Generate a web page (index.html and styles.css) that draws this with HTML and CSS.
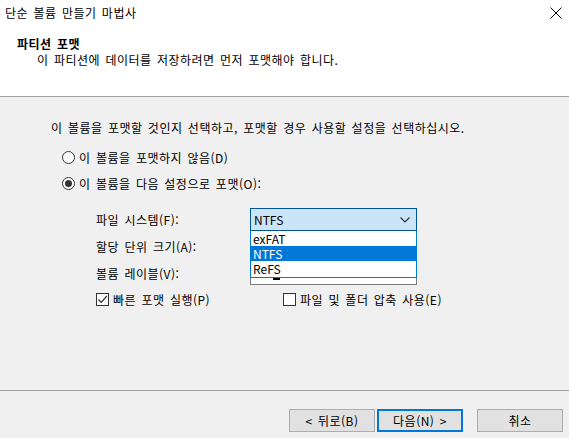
FILE: index.html
```html
<!DOCTYPE html>
<html lang="ko">
<head>
<meta charset="utf-8">
<link rel="stylesheet" href="styles.css">
</head>
<body>
<div class="window">
  <div class="header">
    <div class="titlebar">
      <span class="title">단순 볼륨 만들기 마법사</span>
      <svg class="close" width="12" height="12" viewBox="0 0 12 12"><path d="M0.5 0.5 L11.5 11.5 M11.5 0.5 L0.5 11.5" stroke="#000" stroke-width="1" fill="none"/></svg>
    </div>
    <div class="heading">파티션 포맷</div>
    <div class="subheading">이 파티션에 데이터를 저장하려면 먼저 포맷해야 합니다.</div>
  </div>
  <div class="content">
    <div class="prompt">이 볼륨을 포맷할 것인지 선택하고, 포맷할 경우 사용할 설정을 선택하십시오.</div>
    <div class="radio-row first"><span class="radio"></span><span>이 볼륨을 포맷하지 않음(D)</span></div>
    <div class="radio-row"><span class="radio checked"><span class="dot"></span></span><span>이 볼륨을 다음 설정으로 포맷(O):</span></div>
    <div class="form">
      <div class="field">
        <span class="label">파일 시스템(F):</span>
        <div class="combo-wrap">
          <div class="combo">
            <span>NTFS</span>
            <svg width="10" height="6" viewBox="0 0 10 6"><path d="M0.5 0.5 L5 5 L9.5 0.5" stroke="#333" stroke-width="1.2" fill="none"/></svg>
          </div>
          <div class="list">
            <div class="item">exFAT</div>
            <div class="item selected">NTFS</div>
            <div class="item">ReFS</div>
          </div>
        </div>
      </div>
      <div class="field f2"><span class="label">할당 단위 크기(A):</span></div>
      <div class="field f3"><span class="label">볼륨 레이블(V):</span><div class="textbox"><span class="caret"></span></div></div>
      <div class="checks">
        <div class="check-item c1"><span class="checkbox"><svg width="11" height="11" viewBox="0 0 11 11"><path d="M1.5 5.5 L4.2 8.3 L9.8 2" stroke="#333" stroke-width="1.2" fill="none"/></svg></span><span>빠른 포맷 실행(P)</span></div>
        <div class="check-item"><span class="checkbox"></span><span>파일 및 폴더 압축 사용(E)</span></div>
      </div>
    </div>
  </div>
  <div class="footer">
    <button class="btn">&lt; 뒤로(B)</button>
    <button class="btn default">다음(N) &gt;</button>
    <button class="btn cancel">취소</button>
  </div>
</div>
</body>
</html>
```

FILE: styles.css
```css
* { box-sizing: border-box; }
html, body { margin: 0; padding: 0; }
body {
  width: 569px;
  height: 438px;
  background: #f0f0f0;
  font-family: "Noto Sans CJK KR", "Noto Sans", sans-serif;
  font-size: 12px;
  letter-spacing: 0.5px;
  word-spacing: 1.5px;
  color: #000;
  overflow: hidden;
}
.window { width: 569px; height: 438px; display: flex; flex-direction: column; }
.header {
  background: #fff;
  height: 97px;
  border-bottom: 1px solid #a0a0a0;
  display: flex;
  flex-direction: column;
}
.titlebar {
  height: 26px;
  display: flex;
  align-items: center;
  justify-content: space-between;
  padding: 0 7px 0 5px;
}
.title { line-height: 16px; }
.close { display: block; }
.heading {
  font-weight: bold;
  padding-left: 17px;
  margin-top: 10px;
  line-height: 16px;
}
.subheading {
  padding-left: 37px;
  line-height: 16px;
}
.content {
  flex: 1;
  padding: 23px 0 0 51px;
  border-bottom: 1px solid #a0a0a0;
}
.prompt { line-height: 16px; }
.radio-row {
  display: flex;
  align-items: center;
  gap: 4px;
  margin-left: 11px;
  height: 16px;
  margin-top: 10px;
}
.radio-row.first { margin-top: 13px; }
.radio {
  width: 13px; height: 13px;
  border: 1px solid #333;
  border-radius: 50%;
  background: #fff;
  display: flex;
  align-items: center;
  justify-content: center;
}
.dot { width: 7px; height: 7px; border-radius: 50%; background: #333; }
.form { margin-left: 45px; margin-top: 17px; }
.field {
  display: flex;
  align-items: center;
  height: 23px;
}
.label { width: 154px; line-height: 16px; }
.f2 { margin-top: 4px; }
.f3 { margin-top: 4px; }
.combo-wrap { position: relative; width: 167px; letter-spacing: 0; }
.combo {
  height: 23px;
  background: #cce4f7;
  border: 1px solid #005499;
  display: flex;
  align-items: center;
  justify-content: space-between;
  padding: 0 6px 0 3px;
}
.list {
  position: absolute;
  left: 0; top: 23px;
  width: 167px;
  background: #fff;
  border: 1px solid #0078d7;
  border-top: none;
  z-index: 2;
  padding-bottom: 1px;
}
.item { height: 15px; line-height: 15px; padding-left: 2px; }
.item.selected { background: #0078d7; color: #fff; }
.textbox {
  width: 167px;
  height: 23px;
  border: 1px solid #7a7a7a;
  background: #fff;
  position: relative;
}
.caret {
  position: absolute;
  left: 22px; bottom: 4px;
  width: 7px; height: 2px;
  background: #000;
}
.checks { display: flex; margin-top: 6px; }
.check-item { display: flex; align-items: center; gap: 4px; height: 16px; }
.check-item.c1 { width: 187px; }
.checkbox {
  width: 13px; height: 13px;
  border: 1px solid #333;
  background: #fff;
  display: flex;
  align-items: center;
  justify-content: center;
}
.footer {
  height: 47px;
  display: flex;
  align-items: flex-start;
  padding: 18px 0 0 289px;
}
.btn {
  width: 86px;
  height: 23px;
  background: #e1e1e1;
  border: 1px solid #adadad;
  font-family: inherit;
  font-size: 12px;
  letter-spacing: 0.5px;
  word-spacing: 1.5px;
  color: #000;
  padding: 0;
  margin: 0 2px 0 0;
}
.btn.default { border: 2px solid #0078d7; }
.btn.cancel { margin-left: 12px; }
```
